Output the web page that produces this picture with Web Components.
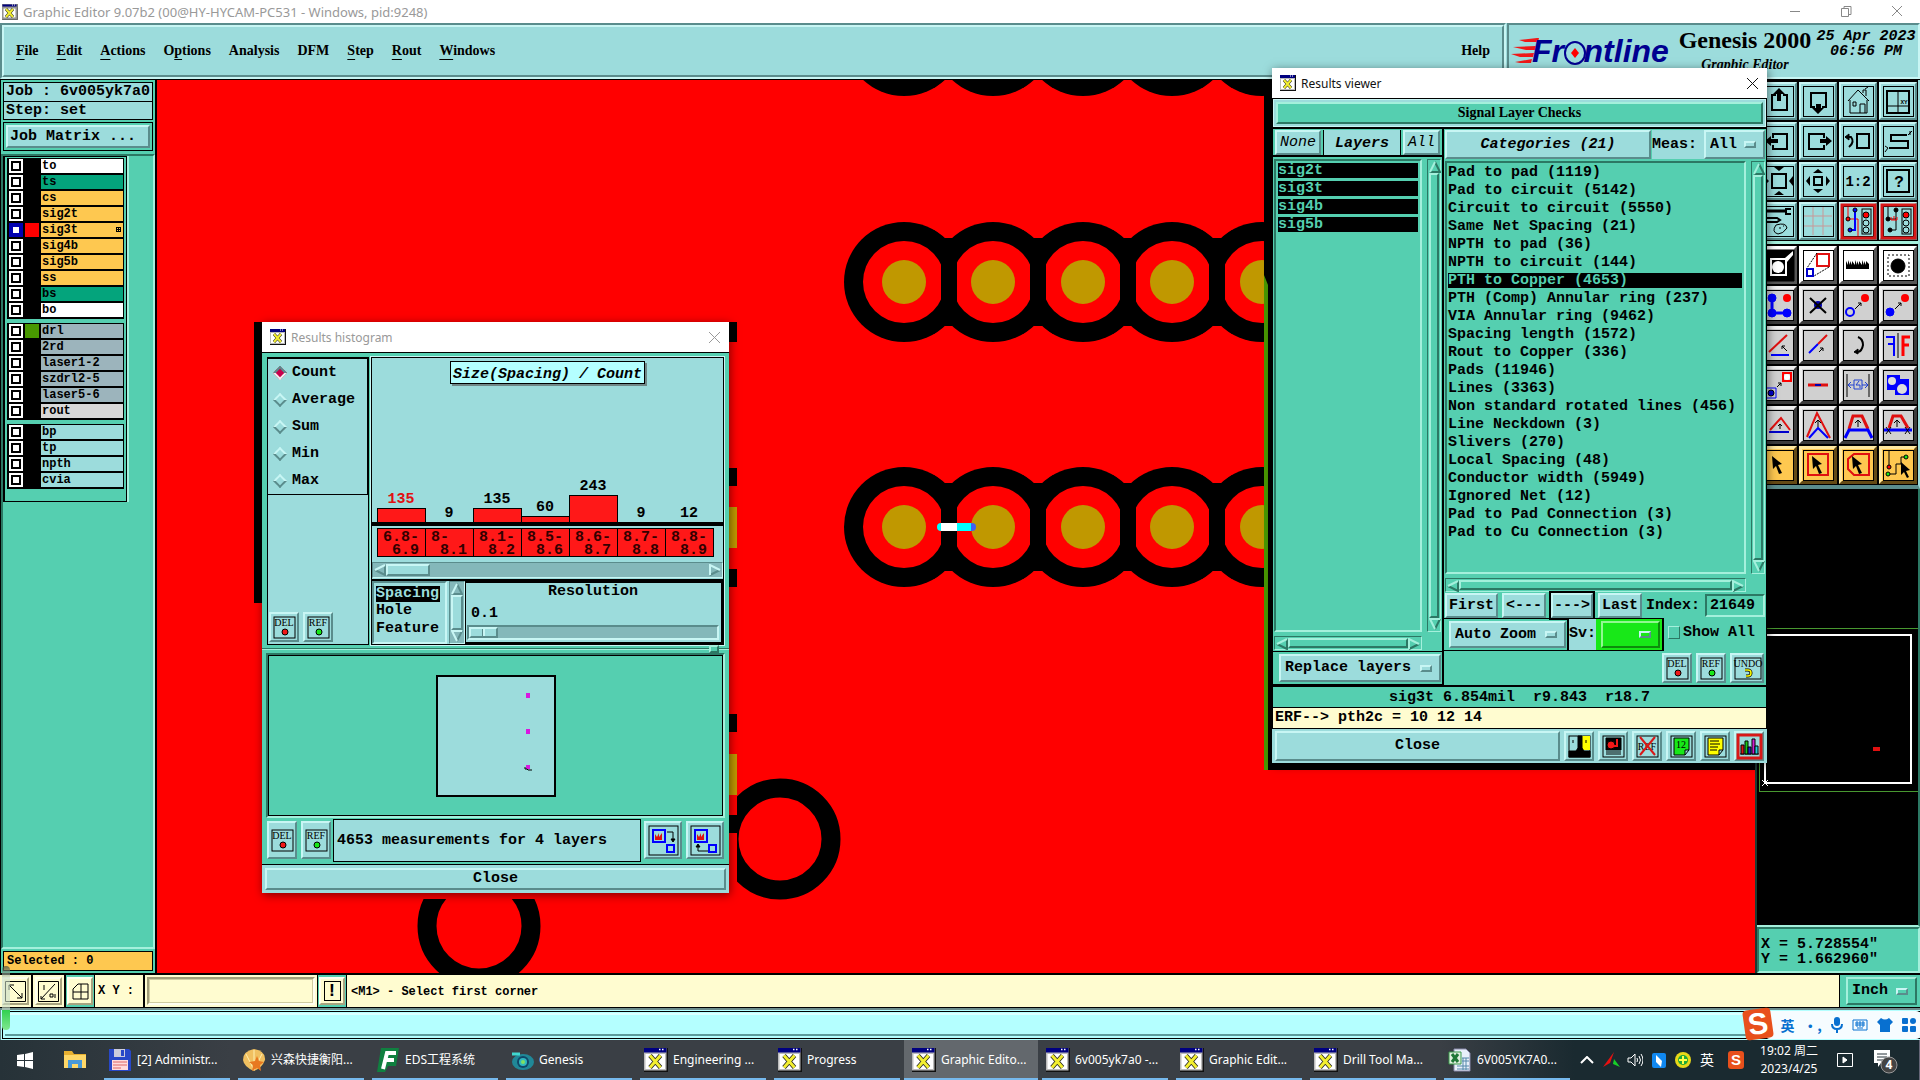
<!DOCTYPE html>
<html lang="en">
<head>
<meta charset="utf-8">
<title>Graphic Editor</title>
<style>
html, body { margin: 0; height: 100%; }
body { overflow: hidden; background: #000; }
</style>
</head>
<body>
<genesis-app></genesis-app>

<script>
// Motif look shared by every element
const base = `
* { box-sizing: border-box; }
:host {
    --aqua: #9cdcdc; --aqua-hi: #c8f6f4; --aqua-lo: #5a8c8c;
    --teal: #55cfb0; --teal-hi: #a4f0dc; --teal-lo: #2c7864;
    --cream: #fffcd0; --gold: #fec850;
    display: block; color: #000;
    font: bold 15px/18px "Liberation Mono", monospace;
}
button, input, select { font: inherit; color: inherit; margin: 0; border-radius: 0; }
button { padding: 0; cursor: default; }
svg { display: block; }
ul { list-style: none; margin: 0; padding: 0; }
.up { background: var(--aqua); border: 2px solid; border-color: var(--aqua-hi) var(--aqua-lo) var(--aqua-lo) var(--aqua-hi); }
.down { border: 2px solid; border-color: var(--teal-lo) var(--teal-hi) var(--teal-hi) var(--teal-lo); }
`;

function define(name, markup, setup) {
    const template = document.createElement('template');
    template.innerHTML = markup;
    customElements.define(name, class extends HTMLElement {
        constructor() {
            super();
            const shadow = this.attachShadow({ mode: 'open' });
            shadow.appendChild(template.content.cloneNode(true));
        }
        connectedCallback() {
            if (setup) setup(this, this.shadowRoot);
        }
    });
}

const appIcon = `<svg width="16" height="16" viewBox="0 0 16 16" aria-hidden="true">
<rect width="16" height="16" fill="#111"/><rect x="0" y="0" width="15" height="15" fill="#bbb"/>
<rect x="1" y="4" width="13" height="10" fill="#fff"/><rect x="0" y="0" width="15" height="3" fill="#000080"/>
<path d="M10 1h1M12 1h1" stroke="#fff"/>
<path d="M4 5l7 8M11 5l-7 8" stroke="#222" stroke-width="3"/><path d="M4 5l7 8M11 5l-7 8" stroke="#f2ee30" stroke-width="2"/></svg>`;

/* ---------- small controls ---------- */

define('motif-button', `<style>${base}
:host { display: flex; }
button { flex: 1; display: flex; align-items: center; justify-content: center; min-width: 0; }
:host([slanted]) button { font-style: italic; }
:host([thin]) button { font-weight: normal; }
:host([start]) button { justify-content: flex-start; padding-left: 2px; }
:host([teal]) button { background: var(--teal); border-color: var(--teal-hi) var(--teal-lo) var(--teal-lo) var(--teal-hi); font: bold 14px "Liberation Serif", serif; }
:host([cream]) button { background: var(--cream); border-color: #fffff0 #a8a480 #a8a480 #fffff0; }
</style><button class="up"><slot></slot></button>`);

define('motif-select', `<style>${base}
:host { display: flex; }
label { flex: 1; display: grid; align-items: center; min-width: 0; }
select { grid-area: 1 / 1; width: 100%; height: 100%; appearance: none; border: 0; outline: 0; background: none; padding: 0 0 0 4px; }
i { grid-area: 1 / 1; justify-self: end; margin-right: 7px; width: 12px; height: 7px; border: 2px solid; border-color: var(--aqua-hi) var(--aqua-lo) var(--aqua-lo) var(--aqua-hi); pointer-events: none; }
:host([tone=teal]) label { background: var(--teal); border-color: var(--teal-hi) var(--teal-lo) var(--teal-lo) var(--teal-hi); }
:host([tone=green]) label { background: #18e818; border-color: #90f890 #0c8c0c #0c8c0c #90f890; }
</style><label class="up"><select><option></option></select><i></i></label>`, (host, root) => {
    root.querySelector('option').textContent = host.getAttribute('value') || '';
    root.querySelector('select').setAttribute('aria-label', host.getAttribute('name'));
});

define('motif-scroll', `<style>${base}
:host { --hi: var(--teal-hi); --lo: var(--teal-lo); display: flex; padding: 1px; border: 1px solid; border-color: var(--teal-lo) var(--teal-hi) var(--teal-hi) var(--teal-lo); align-items: stretch; }
:host([aqua]) { --hi: var(--aqua-hi); --lo: var(--aqua-lo); background: #84b8ba; border-color: var(--aqua-lo) var(--aqua-hi) var(--aqua-hi) var(--aqua-lo); }
:host([vertical]) { flex-direction: column; }
svg { flex: none; fill: none; stroke-width: 2; }
.a { stroke: var(--lo); } .b { stroke: var(--hi); }
.thumb { flex: 1; border: 2px solid; border-color: var(--hi) var(--lo) var(--lo) var(--hi); }
:host([aqua]) .thumb { background: var(--aqua); }
.rest { flex: 0; }
:host([short]) .thumb { flex: none; width: 44px; }
:host([short]) .rest { flex: 1; }
</style><span id="s"></span><div class="thumb"></div><div class="rest"></div><span id="e"></span>`, (host, root) => {
    const v = host.hasAttribute('vertical');
    const arrow = (a, b) => `<svg width="12" height="12" viewBox="0 0 12 12"><path class="a" d="${a}"/><path class="b" d="${b}"/></svg>`;
    root.getElementById('s').innerHTML = v ? arrow('M6 1L11 11H1', 'M1 11L6 1') : arrow('M11 1V11L1 6', 'M1 6L11 1');
    root.getElementById('e').innerHTML = v ? arrow('M11 1L6 11', 'M6 11L1 1H11') : arrow('M1 11L11 6', 'M1 11V1L11 6');
});

// Small labelled icons: DEL, REF, UNDO and the viewer's action buttons
const actions = {
    del: '<rect x="1" y="1" width="21" height="21"/><text x="11" y="10">DEL</text><circle cx="12" cy="16" r="3" fill="#f01818"/>',
    ref: '<rect x="1" y="1" width="21" height="21"/><text x="11" y="10">REF</text><circle cx="12" cy="16" r="3" fill="#18e818"/>',
    undo: '<rect x="-1" y="1" width="26" height="21"/><text x="12" y="10" font-size="9">UNDO</text><path d="M9 13h3a3 3 0 010 6h-2" stroke="#000" stroke-width="3"/><path d="M9 13h3a3 3 0 010 6h-2" stroke="#ff0" stroke-width="1.5"/>',
    lamp: '<rect x="1" y="1" width="21" height="21" fill="#9cdcdc"/><path fill="#ff0" stroke="none" d="M13 1h9v14h-9z"/><path fill="#000" d="M10 1h4v12l2 3h6v6H1v-6h7l2-3z"/><path d="M5 5v3M18 5v3"/>',
    film: '<rect x="1" y="1" width="21" height="21"/><path fill="#000" d="M4 3h15v12H4z"/><circle cx="9" cy="10" r="4" fill="#f01818"/><path d="M15 4v7h-4" stroke="#f01818" stroke-width="2"/><path d="M4 17h15M4 19h15"/>',
    noref: '<rect x="1" y="1" width="21" height="21"/><text x="11" y="15">REF</text><path d="M4 2l15 18M19 2L4 20" stroke="#d81818" stroke-width="2"/>',
    count: '<rect x="1" y="1" width="21" height="21"/><path fill="#18e818" d="M4 3h15v12l-4 5H4zM19 15h-4v5"/><text x="11" y="13" font-weight="bold">12</text>',
    note: '<rect x="1" y="1" width="21" height="21"/><path fill="#ff0" d="M4 3h15v12l-4 5H4zM19 15h-4v5M6 6h9M6 9h10M6 12h8M6 15h7"/>',
    chart: '<rect x="0" y="0" width="23" height="23" stroke="#d81818" stroke-width="3"/><path d="M2 19h19"/><path fill="#d81818" d="M3 10h3v9H3z"/><path fill="#18c818" d="M7 6h3v13H7z"/><path fill="#2020d0" d="M10 12h3v7h-3z"/><path fill="#d020d0" d="M14 4h3v15h-3z"/><path fill="#20d0e0" d="M17 11h3v8h-3z"/>',
    out: '<rect x="-3" y="-3" width="29" height="29"/><rect x="1" y="1" width="12" height="12" stroke="#00f" stroke-width="2"/><path fill="#e01010" stroke="none" d="M3 11V5l2 3 2-4v4l3-4v7z"/><rect x="15" y="16" width="7" height="7" stroke="#00f" stroke-width="2"/><path d="M15 3h6v8"/><path fill="#000" d="M19 10l2 3 2-3z"/>',
    back: '<rect x="-3" y="-3" width="29" height="29"/><rect x="1" y="1" width="12" height="12" stroke="#00f" stroke-width="2"/><path fill="#e01010" stroke="none" d="M3 11V5l2 3 2-4v4l3-4v7z"/><rect x="15" y="16" width="7" height="7" stroke="#00f" stroke-width="2"/><path d="M14 22H4v-5"/><path fill="#000" d="M2 18l2-3 2 3z"/>'
};
define('icon-button', `<style>${base}
:host { flex: none; width: 30px; height: 30px; }
button { width: 100%; height: 100%; display: flex; align-items: center; justify-content: center; }
svg { width: 23px; height: 23px; overflow: visible; fill: none; stroke: #000; flex: none; }
text { font: 10px "Liberation Serif", serif; fill: #000; stroke: none; text-anchor: middle; }
</style><button class="up"><svg viewBox="0 0 23 23"></svg></button>`, (host, root) => {
    root.querySelector('svg').innerHTML = actions[host.getAttribute('icon')];
    root.querySelector('button').setAttribute('aria-label', host.getAttribute('icon'));
});

/* ---------- frame of the main window ---------- */

define('title-bar', `<style>${base}
:host { height: 23px; background: #fff; display: flex; align-items: center; gap: 5px; padding-left: 2px; font: 13px "Noto Sans", "Open Sans", sans-serif; color: #999; }
span { flex: 1; white-space: nowrap; }
button { border: 0; background: none; width: 46px; height: 22px; display: grid; place-items: center; }
svg { fill: none; stroke: #888; }
</style>${appIcon}<span><slot></slot></span>
<button aria-label="Minimize"><svg width="11" height="11"><path d="M0 5.500h10"/></svg></button>
<button aria-label="Restore"><svg width="11" height="11"><path d="M.5 2.500h7v8h-7zM3 2V.5h7v8H8"/></svg></button>
<button aria-label="Close"><svg width="11" height="11"><path d="M0 0l10 10M10 0L0 10"/></svg></button>`);

define('menu-header', `<style>${base}
:host { display: flex; height: 57px; background: var(--aqua); border-bottom: 1px solid #000; }
nav, .brand { border: 2px solid; border-color: var(--aqua-lo) var(--aqua-hi) var(--aqua-hi) var(--aqua-lo); }
nav { flex: 1; display: flex; }
.in { flex: 1; display: flex; align-items: center; gap: 18px; padding: 0 12px 0 12px; border: 2px solid; border-color: var(--aqua-hi) var(--aqua-lo) var(--aqua-lo) var(--aqua-hi); }
nav button { border: 0; background: none; font: bold 14px/20px "Liberation Serif", serif; }
u { text-underline-offset: 4px; }
.help { margin-left: auto; }
.brand { width: 413px; margin-left: 1px; display: flex; padding-left: 2px; }
.product { width: 138px; flex: none; text-align: center; white-space: nowrap; }
.product b { display: block; font: bold 24px/30px "Liberation Serif", serif; }
.product i { font: italic bold 14px/19px "Liberation Serif", serif; }
time { flex: 1; text-align: center; font-style: italic; line-height: 15px; padding-top: 4px; white-space: nowrap; }
.word { font: italic bold 32px "Liberation Sans", sans-serif; fill: #000090; }
</style>
<nav><div class="in">
<button><u>F</u>ile</button><button><u>E</u>dit</button><button><u>A</u>ctions</button><button>O<u>p</u>tions</button><button>Analysis</button><button>DFM</button><button><u>S</u>tep</button><button><u>R</u>out</button><button><u>W</u>indows</button><button class="help">Help</button>
</div></nav>
<div class="brand">
<svg width="165" height="50" viewBox="0 0 165 50" role="img" aria-label="Frontline">
<g fill="#f01818"><path d="M8 15l18-2h2l-1 4H14zM2 22l23-1-1 4h-9zM0 29l23-1-1 4H9zM4 37l17-3-1 4H9z"/></g>
<text class="word" x="21" y="37">Frontline</text>
<ellipse cx="64" cy="28" rx="10" ry="11" fill="#9cdcdc" stroke="#000090" stroke-width="2"/>
<path d="M64 23l4 5-4 5-4-5z" fill="#f00"/></svg>
<div class="product"><b>Genesis 2000</b><i>Graphic Editor</i></div>
<time>25 Apr 2023<br>06:56 PM</time>
</div>`);

const layerGroups = [
    [['to', '#fff'], ['ts', '#04a47c'], ['cs', '#fec850'], ['sig2t', '#fec850'], ['sig3t', '#fec850', '#f00'], ['sig4b', '#fec850'], ['sig5b', '#fec850'], ['ss', '#fec850'], ['bs', '#04a47c'], ['bo', '#fff']],
    [['drl', '#9cb4bc', '#489800'], ['2rd', '#9cb4bc'], ['laser1-2', '#9cb4bc'], ['szdrl2-5', '#9cb4bc'], ['laser5-6', '#9cb4bc'], ['rout', '#d8d8d8']],
    [['bp', '#9cdcdc'], ['tp', '#9cdcdc'], ['npth', '#9cdcdc'], ['cvia', '#9cdcdc']]
];
define('layer-panel', `<style>${base}
:host { width: 157px; background: var(--teal); border: solid #000; border-width: 0 2px 0 1px; padding: 2px; display: flex; flex-direction: column; }
.box { border: 1px solid #000; background: var(--aqua); height: 20px; padding-left: 2px; white-space: nowrap; }
.box + .box { border-top: 0; height: 18px; }
.matrix { border: 1px solid #000; padding: 2px; margin-top: 2px; }
motif-button { height: 23px; }
.area { flex: 1; margin: 3px -2px 2px; border: 2px solid; border-color: var(--teal-lo) var(--teal-hi) var(--teal-hi) var(--teal-lo); }
.layers { width: 124px; border: 1px solid #000; border-left-width: 2px; padding: 1px 2px 8px; box-shadow: 2px 0 var(--teal-hi); }
ul { background: #000; padding: 1px 1px 0 2px; margin-bottom: 4px; width: 117px; }
label { display: flex; gap: 2px; height: 16px; padding-bottom: 2px; font: bold 12px/14px "Liberation Mono", monospace; }
input { appearance: none; width: 14px; height: 14px; background: #fff; border: 2px solid #fff; outline: 2px solid #000; outline-offset: -4px; flex: none; }
input:checked { border-color: #0000b0; outline-color: #0000b0; }
.tint { width: 14px; height: 14px; flex: none; }
.name { flex: 1; padding-left: 1px; display: flex; justify-content: space-between; align-items: center; }
.sel { border: 1px solid #000; background: var(--gold); height: 20px; font: bold 12px/18px "Liberation Mono", monospace; padding-left: 3px; }
</style>
<div class="box">Job : 6v005yk7a0</div><div class="box">Step: set</div>
<div class="matrix"><motif-button start>Job Matrix ...</motif-button></div>
<div class="area"><div class="layers"></div></div>
<div class="sel">Selected : 0</div>`, (host, root) => {
    const grid = '<svg width="7" height="7" fill="none" stroke="#000"><path d="M0 .5h5M0 2.500h5M0 4.500h5M.5 0v5M2.500 0v5M4.500 0v5"/></svg>';
    root.querySelector('.layers').innerHTML = layerGroups.map(group => '<ul>' + group.map(([name, color, tint]) => `
<li><label><input type="checkbox" ${name === 'sig3t' ? 'checked' : ''}><span class="tint" style="background:${tint || '#000'}"></span><span class="name" style="background:${color}">${name}${name === 'sig3t' ? grid : ''}</span></label></li>`).join('') + '</ul>').join('');
});

/* ---------- board drawing ---------- */

define('pcb-canvas', `<style>${base}
:host { flex: 1; min-width: 0; background: #f00; overflow: hidden; border-right: 2px solid #1c3c34; }
svg { width: 100%; height: 100%; }
</style><svg></svg>`, (host, root) => {
    let art = '';
    const xs = [747, 836, 926, 1015, 1105];
    [-44, 202, 447].forEach(y => {
        xs.forEach(x => { art += `<circle cx="${x}" cy="${y}" r="60"/>`; });
        xs.slice(0, 4).forEach(x => { art += `<path d="M${x + 30} ${y - 52}L${x + 40} ${y - 44}h10l10-8v104l-10-8h-10l-10 8z"/>`; });
        xs.forEach(x => {
            art += `<circle cx="${x}" cy="${y}" r="41" fill="#f00"/><circle cx="${x}" cy="${y}" r="22" fill="#c09800"/>`;
        });
        xs.slice(0, 4).forEach(x => { art += `<rect x="${x + 37}" y="${y - 38}" width="16" height="76"/>`; });
    });
    // area hidden by the viewer has not been repainted yet
    art += '<rect x="1107" y="0" width="500" height="690"/><path fill="#489800" d="M1107 195l4 10v485h-4z"/>';
    art += '<path d="M97 242h8v281h-8zM571 242h9v20h-9zM571 388h9v18h-9zM571 489h9v18h-9zM571 634h9v18h-9zM571 735h9v18h-9z"/>';
    art += '<path fill="#c09800" d="M571 427h9v41h-9zM571 674h9v41h-9z"/>';
    art += '<g fill="none" stroke="#000" stroke-width="19"><circle cx="623" cy="759" r="51" clip-path="url(#right)"/><circle cx="322" cy="846" r="52" clip-path="url(#low)"/></g>';
    art += '<g stroke-width="8"><path d="M784 447h28" stroke="#0ff" stroke-linecap="round"/><path d="M784 447h16" stroke="#fff"/><circle cx="815" cy="447" r="4" fill="#4060f0" stroke="none"/><path d="M800 447h14" stroke="#0ff"/></g>';
    root.querySelector('svg').innerHTML = '<defs><clipPath id="right"><path d="M580 600h200v250H580z"/></clipPath><clipPath id="low"><path d="M200 819h250v100H200z"/></clipPath></defs>' + art;
});

/* ---------- tool palette ---------- */

const cursor = '<path fill="#000" stroke="none" d="M9 6l10 8-4 1 4 8-3 1-3-8-3 3z"/>';
const lights = '<rect x="19" y="3" width="9" height="25"/><circle cx="23" cy="9" r="3" fill="red"/><circle cx="23" cy="17" r="3"/><circle cx="23" cy="24" r="3"/>';
const upTools = [
    '<g stroke-width="2"><path d="M13 9H9v15h15V9h-4"/></g><path fill="#000" stroke="none" d="M16 2l6 6h-4v7h-4V8h-4z"/>',
    '<g stroke-width="2"><path d="M12 21H8V7h15v14h-4"/></g><path fill="#000" stroke="none" d="M15 28l6-6h-3v-4h-5v4h-4z"/>',
    '<path d="M5 15L15 4l11 11M7 14v13h17V14M20 7V4h3v6M22 3l3-2M17 27v-9h5v9M10 16h3v4h-3z"/>',
    '<path stroke-width="2" d="M4 5h22v22H4z"/><path d="M15 5v22M4 20h22"/><text x="21" y="18" font-size="6">XY</text>',
    '<path stroke-width="2" d="M10 12V8h14v15H10v-4"/><path fill="#000" stroke="none" d="M2 15l6-5v3h7v4H8v3z"/>',
    '<path stroke-width="2" d="M21 12V8H6v15h15v-4"/><path fill="#000" stroke="none" d="M29 15l-6-5v3h-6v4h6v3z"/>',
    '<path stroke-width="2" d="M14 8h12v14H14zM4 11h4q4 5-2 10"/><path fill="#000" d="M2 11l4-3v6z"/>',
    '<path stroke-width="2" d="M24 9H8v6h17v7H6"/><path d="M25 9l4-4M27 9v-4M5 22l-3 4M2 20l3 2"/>',
    '<path stroke-width="2" d="M9 8h14v14H9z"/><path fill="#000" stroke="none" d="M11 1h10l-5 4zM11 29h10l-5-4zM1 10v10l5-5zM30 10v10l-4-5z"/>',
    '<path stroke-width="2" d="M11 11h8v8h-8z"/><path fill="#000" stroke="none" d="M10 7h10l-5-4zM10 23h10l-5 4zM7 10v10l-4-5zM23 10v10l4-5z"/>',
    '<text x="15" y="20" font-size="14" font-weight="bold" font-family="Liberation Sans">1:2</text>',
    '<path stroke-width="2" d="M4 4h22v22H4z"/><text x="16" y="21" font-size="16" font-weight="bold">?</text>',
    '<path stroke-width="3" d="M2 5h20"/><path stroke-width="2" d="M28 3h-5v5h5M2 12h12l3 2-3 2H2z"/><path d="M13 19q10-3 11 3-4 6-9 6-7-2-2-9zM16 22h2M20 20h1"/>',
    '<path stroke="#c89898" d="M10 1v28M20 1v28M1 10h28M1 20h28"/>',
    '<path stroke="#d81818" stroke-width="3" d="M-1-1h33v33H-1z"/><path stroke="red" d="M5 1v12h10v17"/><circle cx="5" cy="13" r="2" fill="red"/><path stroke="#00f" stroke-width="2" d="M12 4v20H7"/><circle cx="12" cy="4" r="2" fill="#00f"/><circle cx="7" cy="24" r="2" fill="#00f"/>' + lights,
    '<path stroke="#d81818" stroke-width="3" d="M-1-1h33v33H-1z"/><path d="M5 1v12h8M13 4v20H7"/><circle cx="5" cy="13" r="2" fill="#000"/><circle cx="13" cy="4" r="2" fill="#000"/><circle cx="7" cy="24" r="2" fill="#000"/><path stroke="red" d="M8 11v3h6v-3M11 10v4"/>' + lights
];
const editTools = [
    '<path fill="#000" d="M0 0h31v31H0z"/><path fill="#fff" stroke="none" d="M7 8h15l8-7v4l-6 7v14H7z"/><path fill="#000" stroke="none" d="M9 10h13v14H9z"/><circle cx="15" cy="17" r="6" fill="#fff" stroke="none"/>',
    '<path stroke="#e01010" stroke-width="2" d="M14 4h12v12H14z"/><path stroke="#00c" stroke-width="2" d="M4 19h6v7H4z"/><path stroke-dasharray="2 1" d="M14 3L4 18M26 17L11 26"/>',
    '<path fill="#000" stroke="none" d="M3 11l2 4V10l2 5v-4l2 4V11l3 4v-5l2 5v-4l2 4V11l3 4v-5l2 5v-4l2 4V11l3 3v5H3z"/>',
    '<path stroke-dasharray="2 2" d="M5 5h21v21H5z"/><circle cx="15" cy="16" r="7" fill="#000"/>',
    '<g stroke="#00f" fill="#00f"><path fill="none" stroke-width="3" d="M9 8v15h15"/><circle cx="9" cy="8" r="4"/><circle cx="9" cy="23" r="4"/><circle cx="24" cy="23" r="4"/></g><circle cx="24" cy="8" r="4" fill="red" stroke="none"/>',
    '<circle cx="15" cy="15" r="4" fill="#0000b0" stroke="none"/><path stroke-width="2" d="M7 8l16 15M23 8L7 23"/>',
    '<circle cx="22" cy="8" r="4" fill="red" stroke="none"/><circle cx="7" cy="22" r="4" stroke="#00f" stroke-width="2"/><path d="M12 19l6-6M15 13h3v3"/>',
    '<circle cx="22" cy="8" r="4" fill="red" stroke="none"/><circle cx="7" cy="22" r="4" stroke="#00f" fill="#00f"/><path d="M12 19l6-6M15 13h3v3"/>',
    '<path stroke="#e01010" stroke-width="2" d="M6 22L24 5"/><path stroke="#00f" stroke-width="2" d="M8 25h18"/><path d="M24 21l-5-5M19 19v-3h3"/>',
    '<path stroke="#e01010" stroke-width="2" d="M15 14l9-9"/><path stroke="#00f" stroke-width="2" d="M6 23l9-9"/><path d="M16 22l4-4M17 18h3v3"/>',
    '<path stroke-width="2" d="M15 7q5 2 5 8-1 6-5 7"/><path fill="#000" d="M11 22l4-3v5z"/>',
    '<path d="M15 3v25"/><path stroke="#00f" stroke-width="2" d="M3 7h8v19M5 14h6"/><path stroke="red" stroke-width="3" d="M27 7h-7v19M26 15h-6"/>',
    '<path stroke="red" stroke-width="2" d="M20 3h8v8h-8z"/><circle cx="24" cy="7" r="3" fill="#fff" stroke="none"/><path stroke="#00f" d="M3 18h10v10H3z"/><circle cx="8" cy="23" r="3" fill="#00c"/><path d="M14 17l4-4M15 13h3v3"/>',
    '<path stroke="#e01010" stroke-width="3" d="M5 15h20"/><path stroke="#0000b0" stroke-width="2" d="M12 15h6"/>',
    '<path d="M4 4v23M26 4v23"/><path stroke="#2040d0" d="M11 10h8v9h-8zM5 15h6M19 15h6M8 12l-3 3 3 3M22 12l3 3-3 3M16 11l-3 4h4v3"/>',
    '<path fill="#00f" stroke="none" d="M4 5h13v4h9v16H12v-5H4z"/><circle cx="9" cy="11" r="4" fill="#ddd" stroke="none"/><circle cx="19" cy="19" r="5" fill="#ddd" stroke="none"/>',
    '<path stroke="#e01010" stroke-width="2" d="M7 20L18 8l9 12"/><path stroke="#00c" stroke-width="2" d="M6 22h20"/><path d="M17 19v-5M15 16l2-2 2 2"/>',
    '<path stroke="#e01010" stroke-width="2" d="M4 27L14 3l13 25"/><path stroke="#00f" stroke-width="2" d="M6 28l9-10 10 10"/><path d="M15 17v-7M12 13l3-3 3 3"/>',
    '<path stroke="#e01010" stroke-width="3" d="M6 19L10 6h9l6 13"/><path stroke="#00f" stroke-width="3" d="M2 28l4-8h19l4 8"/><path d="M15 17v-7M12 13l3-3 3 3"/>',
    '<path stroke="#e01010" stroke-width="3" d="M6 18L10 6h8l7 12"/><path stroke="#00f" stroke-width="3" d="M1 20h28"/><path d="M14 17v-7M11 13l3-3 3 3M3 17l5 7M8 17l-5 7M22 17l5 7M27 17l-5 7"/>',
    cursor,
    '<path stroke="#e01010" stroke-width="2" d="M5 4h20v21H5z"/>' + cursor,
    '<path stroke="#e01010" stroke-width="2" d="M11 4h15v21H11l-6-6V9z"/>' + cursor,
    '<path d="M6 1v16M6 24h7V14h5V7h5"/><circle cx="6" cy="17" r="2" fill="red"/><circle cx="5" cy="24" r="2" fill="#18e818"/><circle cx="23" cy="7" r="2" fill="#18e818"/><path fill="#000" stroke="none" d="M18 12l9 8-4 1 3 6-2 1-3-6-3 3z"/>'
];
define('tool-panel', `<style>${base}
:host { width: 163px; flex: none; background: var(--teal-lo); display: flex; flex-direction: column; }
.grid { display: grid; grid-template-columns: repeat(4, 38px); gap: 2px; background: #000; padding: 2px 1px 1px 2px; border-right: 2px solid var(--aqua); }
.edit { border-top: 3px solid var(--teal-hi); border-bottom: 4px solid var(--aqua-lo); }
button { width: 38px; height: 38px; border-width: 3px; display: grid; place-items: center; }
.white { background: #fff; border-color: #fff #aaa #aaa #fff; }
.grey { background: #d0d0d0; border-color: #f0f0f0 #909090 #909090 #f0f0f0; }
.gold { background: var(--gold); border-color: #ffe8a0 #b88828 #b88828 #ffe8a0; }
button svg { width: 31px; height: 31px; overflow: visible; fill: none; stroke: #000; margin: -1px; }
text { fill: #000; stroke: none; text-anchor: middle; font-family: "Liberation Mono", monospace; }
.view { flex: 1; background: #000; border-right: 2px solid var(--teal-lo); border-bottom: 2px solid var(--teal-hi); }
.view svg { width: 100%; height: 100%; }
.xy { height: 46px; background: var(--teal); border: 2px solid; border-color: var(--teal-lo) var(--teal-hi) var(--teal-hi) var(--teal-lo); padding: 8px 2px 0; line-height: 15px; white-space: pre; }
</style>
<div class="grid up-tools"></div><div class="grid edit"></div>
<div class="view"><svg fill="none"><path stroke="#489830" d="M2 139.500h160M2.500 139v163M2 302.500h160"/><rect x="8" y="146" width="146" height="148" stroke="#fff" stroke-width="2"/><path stroke="#fff" d="M5 291l6 6M11 291l-6 6"/><rect x="116" y="258" width="7" height="4" fill="#e01010"/></svg></div>
<div class="xy">X = 5.728554"
Y = 1.662960"</div>`, (host, root) => {
    const draw = (art, kind, i) => `<button class="${kind}" aria-label="Tool ${i + 1}"><svg viewBox="0 0 31 31"><rect x=".5" y=".5" width="30" height="30"/>${art}</svg></button>`;
    root.querySelector('.up-tools').innerHTML = upTools.map((art, i) => draw(art, 'up', i)).join('');
    root.querySelector('.edit').innerHTML = editTools.map((art, i) => draw(art, i < 4 ? 'white' : i < 20 ? 'grey' : 'gold', i + 16)).join('');
});

/* ---------- command line ---------- */

define('command-bar', `<style>${base}
:host { height: 35px; border: solid #000; border-width: 2px 0 1px; background: var(--cream); display: flex; font: bold 12px/16px "Liberation Mono", monospace; }
.cell { width: 33px; flex: none; border-right: 2px solid #000; padding: 2px; display: flex; }
.cell.on { width: 29px; background: var(--teal); padding: 2px 1px; border-right: 1px solid #000; }
motif-button { flex: 1; }
svg { fill: none; stroke: #000; }
label { display: flex; align-items: center; padding-left: 3px; width: 223px; flex: none; border-right: 1px solid #000; }
label span { width: 45px; flex: none; white-space: pre; }
.entry { flex: 1; border-left: 2px solid #000; padding: 2px; height: 100%; display: flex; min-width: 0; }
input { width: 100%; background: var(--cream); border: 2px solid; border-color: #a09c78 #fffff0 #fffff0 #a09c78; outline: 1px solid #d0cca0; outline-offset: -3px; }
.msg { flex: 1; align-self: center; padding: 2px 0 0 4px; }
.unit { width: 81px; border-left: 1px solid #000; background: var(--teal); padding: 2px 3px 2px 6px; display: flex; }
.unit motif-select { flex: 1; }
.bang { font-size: 18px; width: 17px; line-height: 18px; border: 1px solid #000; text-align: center; }
</style>
<div class="cell"><motif-button cream><svg width="21" height="21"><path d="M.5.500h20v20H.5zM4 4l13 13M4 9V4h5M12 17h5v-5"/></svg></motif-button></div>
<div class="cell"><motif-button cream><svg width="21" height="21"><path d="M.5.500h20v20H.5zM3 18L17 3M3 15v3h4M6 4v5M12 13h3v3h-3zM17 13v4"/></svg></motif-button></div>
<div class="cell on"><motif-button cream><svg width="17" height="17"><path d="M6 1h10v15H1V6zM1 9h15M9 1v15"/></svg></motif-button></div>
<label><span>X Y :</span><div class="entry"><input aria-label="X Y"></div></label>
<div class="cell on"><motif-button cream><div class="bang">!</div></motif-button></div>
<div class="msg">&lt;M1&gt; - Select first corner</div>
<div class="unit"><motif-select tone="teal" name="Units" value="Inch"></motif-select></div>`);

/* ---------- floating windows ---------- */

define('motif-window', `<style>${base}
:host { position: absolute; background: var(--teal); box-shadow: 1px 2px 9px rgba(0, 0, 0, .5); display: flex; flex-direction: column; }
header { height: 31px; background: #fff; border-bottom: 1px solid #000; display: flex; align-items: center; gap: 5px; padding: 0 2px 0 8px; font: 12px "Noto Sans", "Open Sans", sans-serif; color: #111; }
:host([inactive]) header { color: #999; }
span { flex: 1; }
button { width: 26px; height: 26px; border: 0; background: none; display: grid; place-items: center; }
</style><header>${appIcon}<span></span><button aria-label="Close"><svg width="11" height="11" fill="none" stroke="currentColor"><path d="M0 0l11 11M11 0L0 11"/></svg></button></header><slot></slot>`, (host, root) => {
    root.querySelector('span').textContent = host.getAttribute('caption');
});

const bins = [['135', 14, '6.8-', '6.9'], ['9', 0, '8-', '8.1'], ['135', 14, '8.1-', '8.2'], ['60', 6, '8.5-', '8.6'], ['243', 27, '8.6-', '8.7'], ['9', 0, '8.7-', '8.8'], ['12', 0, '8.8-', '8.9']];
define('results-histogram', `<style>${base}
:host { width: 467px; }
.top { display: flex; gap: 2px; margin: 4px 5px 0; height: 288px; }
.modes { width: 102px; background: var(--aqua); border: 1px solid #000; display: flex; flex-direction: column; }
fieldset { border: 1px solid #000; border-width: 1px 1px 1px 0; margin: 0; padding: 0 0 0 6px; height: 137px; }
.modes label { display: flex; align-items: center; gap: 6px; height: 27px; }
.modes input { appearance: none; width: 10px; height: 10px; margin: 0 1px; border: 2px solid; border-color: var(--aqua-hi) var(--aqua-lo) var(--aqua-lo) var(--aqua-hi); rotate: 45deg; }
.modes input:checked { background: #c8004c; border-color: var(--aqua-lo) #f0f0f0 #f0f0f0 var(--aqua-lo); }
.pair { display: flex; gap: 4px; margin: auto 0 2px 1px; }
.right { flex: 1; border: 1px solid #000; outline: 1px solid var(--aqua-hi); background: var(--aqua); display: flex; flex-direction: column; min-width: 0; }
.chart { height: 204px; display: flex; flex-direction: column; align-items: center; }
h2 { font: inherit; font-style: italic; margin: 3px 0 0; height: 23px; line-height: 25px; padding: 0 2px; border: 1px solid #000; background: #b4ffff; box-shadow: 2px 2px #708888; white-space: pre; }
.bars { flex: 1; align-self: stretch; display: flex; align-items: flex-end; padding-left: 5px; border-bottom: 4px solid #000; }
.bin { width: 48px; text-align: center; line-height: 16px; }
.bin i { display: block; background: #ff1818; border: 1px solid #000; border-bottom: 0; margin-right: -1px; }
.bin:first-child { color: #e01010; }
.ranges { align-self: stretch; display: flex; margin: 2px 0 5px 5px; height: 29px; line-height: 13px; }
.ranges div { width: 48px; flex: none; background: #ff1818; border: 1px solid #000; border-right: 0; padding: 2px 0 0 5px; color: #300; white-space: pre; }
.ranges div:last-child { border-right: 1px solid #000; width: 49px; }
.ranges span { display: block; padding-left: 9px; }
.low { flex: 1; display: flex; border-top: 2px solid #000; margin-top: 1px; }
.types { width: 75px; flex: none; padding: 3px 0 0 2px; border: 2px solid; border-color: var(--aqua-lo) var(--aqua-hi) var(--aqua-hi) var(--aqua-lo); margin-right: 2px; }
.types .on { background: #000; color: var(--aqua); width: 64px; height: 16px; line-height: 16px; }
.res { flex: 1; border: 2px solid #000; border-left-width: 1px; padding: 0 2px 2px 1px; display: flex; flex-direction: column; min-width: 0; }
.res b { text-align: center; }
.res label { padding-left: 4px; margin-top: 4px; }
input[type=range] { appearance: none; width: 100%; height: 15px; margin: auto 0 0; background: #84b8ba; border: 2px solid; border-color: var(--aqua-lo) var(--aqua-hi) var(--aqua-hi) var(--aqua-lo); }
input[type=range]::-webkit-slider-thumb { appearance: none; width: 29px; height: 11px; border: 2px solid; border-color: var(--aqua-hi) var(--aqua-lo) var(--aqua-lo) var(--aqua-hi); background: linear-gradient(90deg, var(--aqua) 11px, var(--aqua-lo) 11px, var(--aqua-lo) 12px, var(--aqua-hi) 12px, var(--aqua-hi) 14px, var(--aqua) 14px); }
.sash { display: flex; justify-content: flex-end; align-items: center; height: 8px; padding-right: 10px; background: linear-gradient(transparent 3px, var(--teal-lo) 3px, var(--teal-lo) 4px, var(--teal-hi) 4px, var(--teal-hi) 5px, transparent 5px); }
.sash i { width: 10px; height: 8px; background: var(--teal); border: 2px solid; border-color: var(--teal-hi) var(--teal-lo) var(--teal-lo) var(--teal-hi); }
.map { margin: 0 4px; height: 165px; border: 2px solid; border-color: var(--teal-lo) var(--teal-hi) var(--teal-hi) var(--teal-lo); display: flex; }
.map div { flex: 1; border: 1px solid #000; display: grid; place-items: center; }
.foot { display: flex; gap: 4px; padding: 1px 5px 2px 5px; height: 46px; }
.foot icon-button { height: 38px; margin-top: 2px; }
.foot .wide { width: 38px; }
.foot p { flex: 1; margin: 0 -1px 0 -2px; border: 1px solid #000; background: var(--aqua); line-height: 41px; padding-left: 3px; white-space: pre; }
.close { background: var(--aqua); border-top: 1px solid #000; padding: 3px; }
.close motif-button { height: 22px; }
</style>
<div class="top">
<div class="modes"><fieldset>
<label><input type="radio" name="m" checked>Count</label><label><input type="radio" name="m">Average</label><label><input type="radio" name="m">Sum</label><label><input type="radio" name="m">Min</label><label><input type="radio" name="m">Max</label></fieldset>
<div class="pair"><icon-button icon="del"></icon-button><icon-button icon="ref"></icon-button></div></div>
<div class="right"><div class="chart"><h2>Size(Spacing) / Count</h2><div class="bars"></div><div class="ranges"></div></div>
<motif-scroll aqua short></motif-scroll>
<div class="low"><ul class="types"><li class="on">Spacing</li><li>Hole</li><li>Feature</li></ul><motif-scroll aqua vertical></motif-scroll>
<div class="res"><b>Resolution</b><label for="res">0.1</label><input id="res" type="range" value="0"></div></div></div>
</div>
<div class="sash"><i></i></div>
<div class="map"><div><svg width="120" height="122"><rect x="1" y="1" width="118" height="120" fill="#9cdcdc" stroke="#000" stroke-width="2"/><path fill="#d818e0" d="M90 18h4v5h-4zM90 54h4v5h-4zM90 90h4v4h-4z"/><path d="M89 92v2h2l1 1h4" fill="none" stroke="#000"/></svg></div></div>
<div class="foot"><icon-button icon="del"></icon-button><icon-button icon="ref"></icon-button><p>4653 measurements for 4 layers</p><icon-button class="wide" icon="out"></icon-button><icon-button class="wide" icon="back"></icon-button></div>
<div class="close"><motif-button>Close</motif-button></div>`, (host, root) => {
    root.querySelector('.bars').innerHTML = bins.map(([n, h]) => `<div class="bin">${n}${h ? `<i style="height:${h}px"></i>` : ''}</div>`).join('');
    root.querySelector('.ranges').innerHTML = bins.map(([, , from, to]) => `<div>${from}<span>${to}</span></div>`).join('');
});

const categories = ['Pad to pad (1119)', 'Pad to circuit (5142)', 'Circuit to circuit (5550)', 'Same Net Spacing (21)', 'NPTH to pad (36)', 'NPTH to circuit (144)', 'PTH to Copper (4653)', 'PTH (Comp) Annular ring (237)', 'VIA Annular ring (9462)', 'Spacing length (1572)', 'Rout to Copper (336)', 'Pads (11946)', 'Lines (3363)', 'Non standard rotated lines (456)', 'Line Neckdown (3)', 'Slivers (270)', 'Local Spacing (48)', 'Conductor width (5949)', 'Ignored Net (12)', 'Pad to Pad Connection (3)', 'Pad to Cu Connection (3)'];
define('results-viewer', `<style>${base}
:host { width: 495px; padding: 0 1px; background: #000; }
.head { background: var(--aqua); border: 1px solid var(--aqua-hi); padding: 2px; height: 28px; margin-bottom: 2px; }
.head motif-button { height: 22px; }
.cols { display: grid; grid-template-columns: 169px 1fr; gap: 2px; height: 556px; }
.cols > div { background: var(--teal); display: flex; flex-direction: column; min-width: 0; }
.tabs { display: flex; height: 28px; border-bottom: 2px solid #000; padding: 1px 2px 0; }
.tabs motif-button { width: 46px; }
.tabs b { flex: 1; font-style: italic; background: var(--aqua); text-align: center; line-height: 27px; border: solid #000; border-width: 0 1px; margin: 0 2px; }
.tabs motif-button:last-child { width: 37px; }
.list { flex: 1; display: grid; grid-template-columns: 1fr 14px; grid-template-rows: 1fr 14px; gap: 4px 5px; padding: 2px 1px 1px 1px; }
.list ul { padding: 2px; }
#cats { padding-left: 1px; }
li { height: 15px; line-height: 16px; margin-bottom: 3px; white-space: pre; }
.on { background: #000; color: var(--teal); }
.replace { border: 1px solid #000; border-width: 1px 0; padding: 2px 1px 2px 6px; height: 34px; display: flex; }
motif-select { flex: 1; }
.cat { display: flex; height: 30px; padding: 1px 1px 0; }
.cat motif-button { width: 206px; flex: none; }
.cat span { background: var(--aqua); margin-left: 1px; width: 52px; line-height: 29px; flex: none; }
.nav { display: flex; gap: 4px; height: 25px; padding: 0 1px; align-items: stretch; }
.nav motif-button { width: 44px; flex: none; }
.nav .first { width: 53px; }
.nav .next { width: 42px; outline: 2px solid #000; margin: 0 1px; }
.nav label { flex: 1; display: flex; align-items: center; justify-content: space-between; min-width: 0; }
.nav input { width: 60px; height: 23px; background: none; padding: 0 0 0 3px; }
.zoom { display: flex; height: 33px; }
.zoom .set { display: flex; width: 220px; flex: none; border: 1px solid #000; border-width: 1px 2px 1px 0; }
.zoom .a { width: 125px; border-right: 2px solid #000; padding: 2px 1px 2px 5px; display: flex; }
.zoom .s { background: var(--aqua); width: 27px; line-height: 30px; }
.zoom .g { background: #18e818; flex: 1; padding: 2px 2px 2px 5px; display: flex; }
.zoom label { display: flex; align-items: center; gap: 3px; padding: 0 0 4px 4px; white-space: pre; }
.zoom input { appearance: none; width: 12px; height: 13px; border: 1px solid; border-color: var(--teal-hi) var(--teal-lo) var(--teal-lo) var(--teal-hi); }
.acts { display: flex; gap: 4px; justify-content: flex-end; height: 34px; padding: 2px 2px 0 0; }
.acts .undo { width: 34px; }
.stat { background: var(--teal); margin-top: 2px; height: 20px; line-height: 21px; text-align: center; white-space: pre; }
.erf { background: var(--cream); margin: 1px 0; height: 20px; line-height: 20px; padding-left: 2px; }
.foot { background: var(--aqua); margin: 0 -1px; padding: 2px 3px; display: flex; gap: 4px; height: 34px; }
.foot motif-button { flex: 1; }
</style>
<div class="head"><motif-button teal>Signal Layer Checks</motif-button></div>
<div class="cols">
<div><div class="tabs"><motif-button slanted thin>None</motif-button><b>Layers</b><motif-button slanted thin>All</motif-button></div>
<div class="list"><ul class="down"><li class="on">sig2t</li><li class="on">sig3t</li><li class="on">sig4b</li><li class="on">sig5b</li></ul><motif-scroll vertical></motif-scroll><motif-scroll></motif-scroll></div>
<div class="replace"><motif-select name="Layer mode" value="Replace layers"></motif-select></div></div>
<div><div class="cat"><motif-button slanted>Categories (21)</motif-button><span>Meas:</span><motif-select name="Measurements" value="All"></motif-select></div>
<div class="list"><ul class="down" id="cats"></ul><motif-scroll vertical></motif-scroll><motif-scroll></motif-scroll></div>
<div class="nav"><motif-button class="first">First</motif-button><motif-button>&lt;---</motif-button><motif-button class="next">---&gt;</motif-button><motif-button>Last</motif-button><label>Index:<input class="down" value="21649"></label></div>
<div class="zoom"><div class="set"><div class="a"><motif-select name="Zoom" value="Auto Zoom"></motif-select></div><div class="s">Sv:</div><div class="g"><motif-select tone="green" name="Severity"></motif-select></div></div><label><input type="checkbox">Show All</label></div>
<div class="acts"><icon-button icon="del"></icon-button><icon-button icon="ref"></icon-button><icon-button class="undo" icon="undo"></icon-button></div></div>
</div>
<div class="stat">sig3t 6.854mil  r9.843  r18.7</div>
<div class="erf">ERF--&gt; pth2c = 10 12 14</div>
<div class="foot"><motif-button>Close</motif-button><icon-button icon="lamp"></icon-button><icon-button icon="film"></icon-button><icon-button icon="noref"></icon-button><icon-button icon="count"></icon-button><icon-button icon="note"></icon-button><icon-button icon="chart"></icon-button></div>`, (host, root) => {
    root.getElementById('cats').innerHTML = categories.map(c => `<li${c.startsWith('PTH to') ? ' class="on"' : ''}>${c}</li>`).join('');
});

/* ---------- desktop ---------- */

const taskIcons = {
    app: appIcon,
    disk: '<svg viewBox="0 0 24 24"><path fill="#2848c8" d="M1 1h20l2 2v20H1z"/><path fill="#ccd" d="M6 1h11v8H6z"/><path fill="#2848c8" d="M13 2h3v6h-3z"/><path fill="#fdd" d="M4 12h16v10H4z"/><path stroke="#d66" d="M5 14h14M5 17h14M5 20h8"/></svg>',
    shell: '<svg viewBox="0 0 24 24"><path fill="#f0c060" d="M12 1q12 2 11 11-3 8-11 11Q2 19 1 12 1 3 12 1z"/><path stroke="#fff0b0" fill="none" d="M12 22L4 6M12 22V2M12 22l8-16"/><path fill="#e87820" d="M15 8l2 5 5 1-4 3 1 6-4-3-5 3 1-6-4-3 6-1z"/></svg>',
    eds: '<svg viewBox="0 0 24 24"><path fill="#108040" d="M5 0h18l-3 18h-8l-3 6H1z"/><path stroke="#fff" stroke-width="4" fill="none" d="M20 5h-9L7 21M9 12h9"/></svg>',
    eye: '<svg viewBox="0 0 24 24"><ellipse cx="13" cy="14" rx="11" ry="8" fill="#208898"/><circle cx="13" cy="14" r="6" fill="#104868"/><circle cx="13" cy="14" r="4" fill="#30b8c0"/><circle cx="13" cy="14" r="2" fill="#80e060"/><path stroke="#40d8d0" stroke-width="3" d="M2 6h8"/></svg>',
    sheet: '<svg viewBox="0 0 24 24"><path fill="#e8f0fa" stroke="#88a" d="M6 1h12l4 4v18H6z"/><path fill="#e0f0e0" stroke="#389848" d="M1 4h12v12H1z"/><path stroke="#207838" stroke-width="3" d="M4 6l6 8M10 6l-6 8"/><path stroke="#58a" d="M14 10h7M14 13h7M9 18h12M9 21h12M15 10v12M18 10v12"/></svg>'
};
const tasks = [['disk', '[2] Administr...'], ['shell', '兴森快捷衡阳...'], ['eds', 'EDS工程系统'], ['eye', 'Genesis'], ['app', 'Engineering ...'], ['app', 'Progress'], ['app', 'Graphic Edito...', 1], ['app', '6v005yk7a0 -...'], ['app', 'Graphic Edit...'], ['app', 'Drill Tool Ma...'], ['sheet', '6V005YK7A0...']];
define('task-bar', `<style>${base}
:host { height: 40px; display: flex; background: linear-gradient(90deg, #263238, #3a3f45 12%, #3a3f45 75%, #1a2a30 82%); color: #fff; font: 12px/18px "Noto Sans", "Noto Sans CJK SC", sans-serif; }
button { border: 0; background: none; display: flex; align-items: center; justify-content: center; flex: none; }
.start { width: 49px; }
.files { width: 51px; }
#tasks { display: flex; }
.task { width: 126px; margin: 0 4px; border-bottom: 2px solid #76b9ed; justify-content: flex-start; gap: 5px; padding-left: 4px; padding-top: 2px; white-space: nowrap; overflow: hidden; }
.task.on { width: 134px; margin: 0; padding-left: 8px; background: #63686d; }
.task svg { width: 24px; height: 24px; flex: none; }
.tray { margin-left: auto; display: flex; align-items: center; }
.tray > * { width: 24px; display: grid; place-items: center; }
.tray .s { width: 34px; }
.tray .s b { background: #e8501c; color: #fff; width: 16px; border-radius: 3px; text-align: center; font: bold 15px/18px "Liberation Sans", sans-serif; }
.tray time { width: 72px; display: block; text-align: center; line-height: 18px; }
.tray .play, .tray .note { width: 40px; }
.tray .lang { font-size: 14px; }
.tray .edge { width: 15px; border-right: 1px solid #667; height: 100%; }
text { font: bold 12px "Noto Sans", sans-serif; fill: #fff; text-anchor: middle; }
</style>
<button class="start" aria-label="Start"><svg width="16" height="17"><path fill="#fff" d="M0 3l7-1v6H0zM8 2l8-2v8H8zM0 9h7v6l-7-1zM8 9h8v8l-8-2z"/></svg></button>
<button class="files" aria-label="Explorer"><svg width="22" height="20"><path fill="#e8b030" d="M0 1h8l2 3h12v14H0z"/><path fill="#ffd868" d="M0 5h22v13H0z"/><path fill="#4898d8" d="M4 18v-8h14v8h-4v-4H8v4z"/></svg></button>
<div id="tasks"></div>
<div class="tray">
<span><svg width="14" height="8" fill="none" stroke="#fff" stroke-width="2"><path d="M1 7l6-6 6 6"/></svg></span>
<span><svg width="17" height="16"><path fill="#e81010" d="M11 0L7 11l-7 4z"/><path fill="#18d028" d="M11 7l6 8-7-3z"/></svg></span>
<span><svg width="16" height="14" fill="none" stroke="#fff"><path d="M1 5h3l4-4v12L4 9H1zM10 5q1 2 0 4M12 3q3 4 0 8M14 1q4 6 0 12"/></svg></span>
<span><svg width="14" height="15"><rect width="14" height="15" rx="2" fill="#1088f0"/><path fill="#fff" d="M4 2l6 6-1 6-5-5z"/></svg></span>
<span><svg width="16" height="16"><circle cx="8" cy="8" r="8" fill="#e8d818"/><circle cx="8" cy="8" r="5" fill="#20a838"/><path stroke="#ff4" stroke-width="2" d="M4 8h8M8 4v8"/></svg></span>
<span class="lang">英</span><span class="s"><b>S</b></span>
<time>19:02 周二<br>2023/4/25</time>
<span class="play"><svg width="16" height="14" fill="none" stroke="#fff"><path d="M.5.500h15v13H.5z"/><path fill="#fff" d="M6 4l4 3-4 3z"/></svg></span>
<span class="note"><svg width="26" height="28"><path fill="#fff" d="M2 4h16v13H9l-3 4v-4H2z"/><path stroke="#263238" d="M5 8h10M5 11h10M5 14h6"/><circle cx="17" cy="19" r="8" fill="#444" stroke="#999"/><text x="17" y="23">4</text></svg></span>
<span class="edge"></span>
</div>`, (host, root) => {
    root.getElementById('tasks').innerHTML = tasks.map(([icon, text, on]) => `<button class="task${on ? ' on' : ''}">${taskIcons[icon]}<span>${text}</span></button>`).join('');
});

define('ime-bar', `<style>${base}
:host { position: absolute; right: 0; bottom: 41px; width: 154px; height: 28px; padding-left: 10px; background: #f6fcff; border-radius: 4px; display: flex; align-items: center; justify-content: space-around; color: #0870d0; font: bold 14px "Noto Sans CJK SC", sans-serif; }
b { position: absolute; left: -22px; top: -2px; width: 28px; height: 30px; rotate: -8deg; border-radius: 4px; background: #e8501c; color: #fff; font: bold 30px/30px "Liberation Sans", sans-serif; text-align: center; }
svg { fill: #0870d0; }
</style><b>S</b><span>英</span><span>•,</span>
<svg width="12" height="16"><rect x="3" width="6" height="9" rx="3"/><path d="M1 7q0 5 5 5t5-5M6 12v4" fill="none" stroke="#0870d0" stroke-width="2"/></svg>
<svg width="16" height="12" viewBox="0 0 16 12"><path fill="none" stroke="#0870d0" stroke-width="1" d="M1 1h14v10H1zM3 4h10M3 6h10M5 9h6M5 2v6M8 2v6M11 2v6"/></svg>
<svg width="16" height="14"><path d="M4 0q4 3 8 0l4 4-3 3v7H3V7L0 4z"/></svg>
<svg width="14" height="14"><rect width="6" height="6" rx="1"/><rect y="8" width="6" height="6" rx="1"/><rect x="8" y="8" width="6" height="6" rx="1"/><circle cx="11" cy="3" r="3"/></svg>`);

define('genesis-app', `<style>${base}
:host { position: relative; display: flex; flex-direction: column; height: 100vh; overflow: hidden; }
main { flex: 1; display: flex; min-height: 0; }
.log { height: 32px; background: #b4ffff; border: solid #6c8c8c; border-width: 2px 0 0 1px; padding: 1px 0 1px 1px; display: flex; }
.log div { flex: 1; border-top: 1px solid #000; border-bottom: 1px solid #000; border-left: 1px solid #000; padding: 1px 0 2px 2px; display: flex; }
.log i { flex: 1; border-top: 2px solid #dcffff; border-bottom: 2px solid #5c9c9c; }
.win1 { left: 262px; top: 322px; }
.win2 { left: 1272px; top: 68px; }
.meter { position: absolute; left: 2px; bottom: 50px; width: 8px; height: 64px; border-radius: 4px; background: linear-gradient(rgba(60, 70, 60, .7), rgba(200, 220, 200, .6) 12px, rgba(200, 220, 200, .6) 44px, #30d050 44px, #80e890); }
</style>
<title-bar>Graphic Editor 9.07b2 (00@HY-HYCAM-PC531 - Windows, pid:9248)</title-bar>
<menu-header></menu-header>
<main><layer-panel></layer-panel><pcb-canvas></pcb-canvas><tool-panel></tool-panel></main>
<command-bar></command-bar>
<div class="log"><div><i></i></div></div>
<task-bar></task-bar>
<motif-window class="win1" inactive caption="Results histogram"><results-histogram></results-histogram></motif-window>
<motif-window class="win2" caption="Results viewer"><results-viewer></results-viewer></motif-window>
<div class="meter"></div>
<ime-bar></ime-bar>`);
</script>
</body>
</html>
